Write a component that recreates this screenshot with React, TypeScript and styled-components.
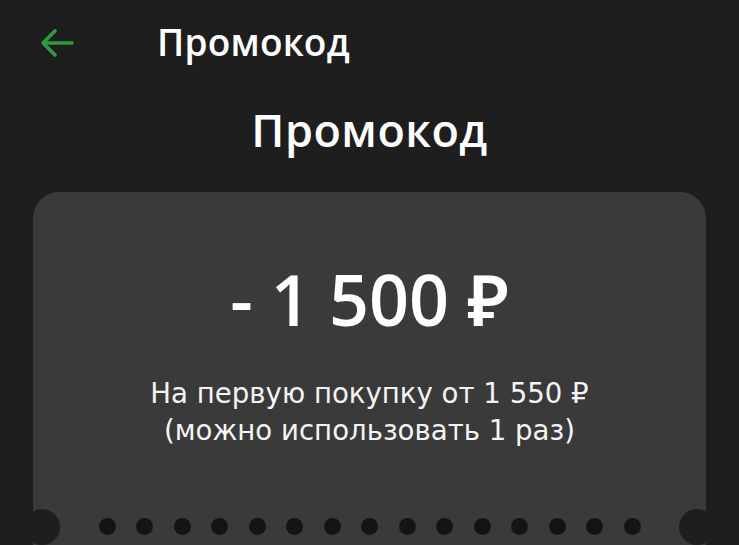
import React from "react";
import styled, { createGlobalStyle } from "styled-components";

const GlobalStyle = createGlobalStyle`
    html, body {
        margin: 0;
        padding: 0;
        background: #1e1e1e;
        overflow: hidden;
    }
    body {
        font-family: "Open Sans", "Noto Sans", sans-serif;
        color: #ffffff;
    }
`;

const Page = styled.div`
    width: 739px;
    height: 545px;
    overflow: hidden;
`;

const Header = styled.div`
    height: 82px;
    display: flex;
    align-items: center;
    padding-left: 40px;
    gap: 83px;
`;

const BackButton = styled.button`
    width: 34px;
    height: 30px;
    margin-top: 4px;
    padding: 0;
    border: none;
    background: none;
    display: flex;
    cursor: pointer;
`;

const HeaderTitle = styled.h1`
    margin: 0;
    font-size: 37px;
    font-weight: 600;
    letter-spacing: 0.2px;
`;

const Title = styled.h2`
    margin: 17px 0 0;
    text-align: center;
    font-size: 45px;
    font-weight: 600;
    letter-spacing: 0.5px;
    line-height: 61px;
`;

const Ticket = styled.div`
    position: relative;
    margin: 32px 33px 0;
    height: 420px;
    background: #3a3a3a;
    border-radius: 26px;
    display: flex;
    flex-direction: column;
    align-items: center;

    /* вырезы билета по бокам */
    &::before,
    &::after {
        content: "";
        position: absolute;
        top: 317px;
        width: 36px;
        height: 36px;
        border-radius: 50%;
        background: #1e1e1e;
    }
    &::before {
        left: -9px;
    }
    &::after {
        right: -9px;
    }
`;

const Amount = styled.div`
    margin-top: 72px;
    font-size: 70px;
    font-weight: 600;
    line-height: 1;
`;

const Description = styled.p`
    margin: 41px 0 0;
    text-align: center;
    font-family: "DejaVu Sans", "Open Sans", sans-serif;
    font-size: 27.6px;
    line-height: 37px;
    color: #f4f4f4;
`;

const Dots = styled.div`
    margin-top: 69px;
    display: flex;
    gap: 20.5px;
`;

const Dot = styled.span`
    width: 17px;
    height: 17px;
    border-radius: 50%;
    background: #141414;
`;

const ArrowIcon = () => (
    <svg width="34" height="30" viewBox="0 0 34 30" fill="none">
        <path
            d="M3 15H32M15 3L3 15L15 27"
            stroke="#2a9e3c"
            strokeWidth="3.6"
            strokeLinecap="round"
            strokeLinejoin="round"
        />
    </svg>
);

const App = (): JSX.Element => {
    const dots = Array.from({ length: 15 });

    return (
        <>
            <GlobalStyle />
            <Page>
                <Header>
                    <BackButton aria-label="Назад">
                        <ArrowIcon />
                    </BackButton>
                    <HeaderTitle>Промокод</HeaderTitle>
                </Header>
                <Title>Промокод</Title>
                <Ticket>
                    <Amount>- 1 500 ₽</Amount>
                    <Description>
                        На первую покупку от 1 550 ₽
                        <br />
                        (можно использовать 1 раз)
                    </Description>
                    <Dots>
                        {dots.map((_, i) => (
                            <Dot key={i} />
                        ))}
                    </Dots>
                </Ticket>
            </Page>
        </>
    );
};

export default App;
